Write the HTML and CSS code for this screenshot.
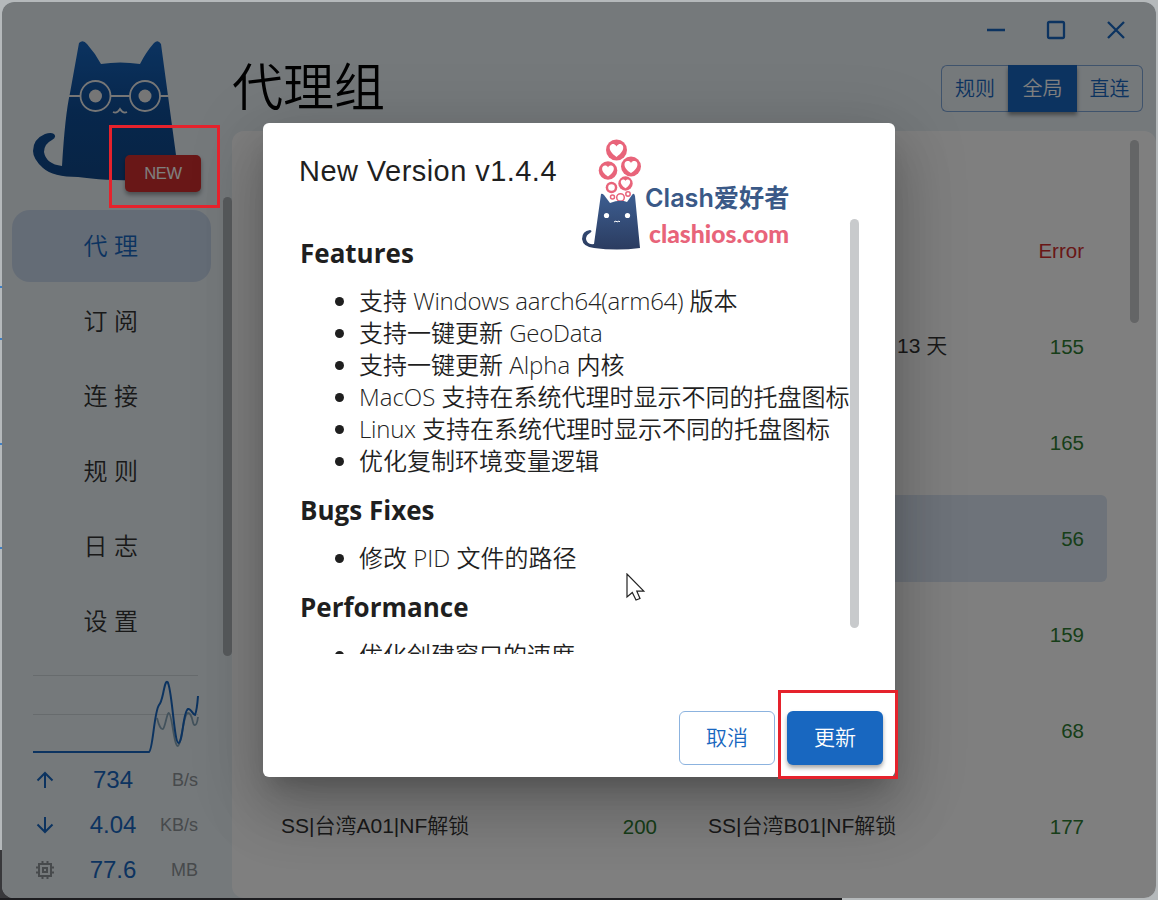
FILE: index.html
```html
<!DOCTYPE html>
<html lang="zh-CN">
<head>
  <meta charset="UTF-8" />
  <title>Clash Verge</title>
  <link rel="stylesheet" href="styles.css">
</head>
<body>

  <div class="window">

    <!-- SIDEBAR -->
    <aside class="sidebar">
      <div class="logo">
        <svg width="146" height="143" viewBox="0 0 146 143">
          <defs>
            <linearGradient id="catFill" x1="0" y1="0" x2="0" y2="1">
              <stop offset="0" stop-color="#1766c0" />
              <stop offset="0.5" stop-color="#0f4e98" />
              <stop offset="1" stop-color="#10488a" />
            </linearGradient>
          </defs>
          <path fill="url(#catFill)" d="M46 3Q50-1 54 4Q62 13 68 24Q87 21 107 24Q113 12 121 3Q125-1 128 4L143 115V140Q80 142 45 137Q20 137 10 128Q0 119 0 111Q0 99 12 94Q18 92 21 94Q24 97 19 100Q11 104 11 112Q13 124 29 126Q32 75 37 53Z" />
          <g fill="none" stroke="#ededed" stroke-width="1.8">
            <path d="M36 56H47M78 56H97M127 56H136" />
            <circle cx="62.500" cy="56" r="15" />
            <circle cx="112" cy="56" r="15" />
            <path d="M80 72Q84 74 87 69Q90 74 94 72" />
          </g>
          <circle cx="62.500" cy="56" r="6.500" fill="#ededed" />
          <circle cx="112" cy="56" r="6.500" fill="#ededed" />
        </svg>
        <button class="new-btn">NEW</button>
      </div>

      <ul class="menu">
        <li class="active">代理</li>
        <li>订阅</li>
        <li>连接</li>
        <li>规则</li>
        <li>日志</li>
        <li>设置</li>
      </ul>

      <div class="traffic">
        <svg class="graph" width="166" height="80" viewBox="0 0 166 80" fill="none">
          <path d="M0 1.500H165M0 40.500H165" stroke="#cfd6db" />
          <path d="M124 44Q127 56 130 55C132 54 134 38 136 39C139 40 141 73 145 72C149 70 150 40 155 39C160 39 159 52 162 51Q164 51 165 43" stroke="#86a5b8" stroke-width="1.800" />
          <path d="M0 78H116C120 76 121 38 126 31Q128 29 130 20C132 10 133 7 134.500 8C139 13 141 69 145.500 69C150 68 150 37 155 35C158 34 160 41 162 41Q164 36 165 22" stroke="#1867c0" stroke-width="2" />
        </svg>
        <div class="stat">
          <svg width="24" height="24" viewBox="0 0 24 24"><path d="M12 20V5M4.500 12.500L12 5L19.500 12.500" /></svg>
          <b>734</b><span>B/s</span>
        </div>
        <div class="stat">
          <svg width="24" height="24" viewBox="0 0 24 24"><path d="M12 4V19M4.500 11.500L12 19L19.500 11.500" /></svg>
          <b>4.04</b><span>KB/s</span>
        </div>
        <div class="stat">
          <svg class="chip" width="24" height="24" viewBox="0 0 24 24"><path d="M6 6H18V18H6ZM10 10H14V14H10ZM9.500 6V3M14.500 6V3M9.500 21V18M14.500 21V18M3 9.500H6M3 14.500H6M18 9.500H21M18 14.500H21" /></svg>
          <b>77.6</b><span>MB</span>
        </div>
      </div>
      <i class="scrollbar side-scroll"></i>
    </aside>

    <!-- PROXIES PAGE -->
    <main class="main">
      <div class="controls">
        <svg width="24" height="24" viewBox="0 0 24 24"><path d="M3 12H21" /></svg>
        <svg width="24" height="24" viewBox="0 0 24 24"><rect x="4" y="4" width="16" height="16" rx="1.500" /></svg>
        <svg width="24" height="24" viewBox="0 0 24 24"><path d="M4 4L20 20M20 4L4 20" /></svg>
      </div>
      <header class="header">
        <h1>代理组</h1>
        <div class="modes">
          <button>规则</button>
          <button class="active">全局</button>
          <button>直连</button>
        </div>
      </header>

      <section class="panel">
        <div class="proxies">
          <div class="proxy"></div>
          <div class="proxy"><em class="error">Error</em></div>
          <div class="proxy"></div>
          <div class="proxy"><span>距离下次重置剩余：13 天</span><em>155</em></div>
          <div class="proxy"></div>
          <div class="proxy"><em>165</em></div>
          <div class="proxy"></div>
          <div class="proxy selected"><em>56</em></div>
          <div class="proxy"></div>
          <div class="proxy"><em>159</em></div>
          <div class="proxy"></div>
          <div class="proxy"><em>68</em></div>
          <div class="proxy"><span>SS|台湾A01|NF解锁</span><em>200</em></div>
          <div class="proxy"><span>SS|台湾B01|NF解锁</span><em>177</em></div>
        </div>
        <i class="scrollbar panel-scroll"></i>
      </section>
    </main>
  </div>

  <!-- UPDATE DIALOG -->
  <div class="backdrop">
    <div class="dialog">
      <h2>New Version v1.4.4</h2>
      <div class="notes">
        <h3>Features</h3>
        <ul>
          <li>支持 <span class="narrow">Windows aarch64(arm64)</span> 版本</li>
          <li>支持一键更新 <span class="narrow">GeoData</span></li>
          <li>支持一键更新 Alpha 内核</li>
          <li>MacOS 支持在系统代理时显示不同的托盘图标</li>
          <li><span class="narrow">Linux</span> 支持在系统代理时显示不同的托盘图标</li>
          <li>优化复制环境变量逻辑</li>
        </ul>
        <h3>Bugs Fixes</h3>
        <ul>
          <li>修改 PID 文件的路径</li>
        </ul>
        <h3>Performance</h3>
        <ul>
          <li>优化创建窗口的速度</li>
        </ul>
        <i class="scrollbar notes-scroll"></i>
      </div>
      <div class="actions">
        <button>取消</button>
        <button class="primary">更新</button>
      </div>

      <div class="brand">
        <svg width="60" height="112" viewBox="0 0 60 112">
          <defs>
            <linearGradient id="brandFill" x1="0" y1="0" x2="0" y2="1">
              <stop offset="0" stop-color="#3d5e91" />
              <stop offset="1" stop-color="#2b3c60" />
            </linearGradient>
            <path id="heart" d="M0 6C-9 0-6-6-2-5Q0-4 0-3Q0-4 2-5C6-6 9 0 0 6Z" fill="#fff" />
          </defs>
          <g fill="#e8647a">
            <circle cx="34.500" cy="11" r="10.500" />
            <circle cx="26" cy="31.500" r="9.300" />
            <circle cx="49" cy="27.500" r="10" />
            <circle cx="43.500" cy="44.500" r="7.200" />
            <circle cx="29.500" cy="48.500" r="5.800" />
          </g>
          <use href="#heart" transform="translate(34.500 11) scale(1.150)" />
          <use href="#heart" transform="translate(26 31.500) scale(1)" />
          <use href="#heart" transform="translate(49 27.500) scale(1.100)" />
          <use href="#heart" transform="translate(43.500 44.500) scale(.8)" />
          <circle cx="29.500" cy="48.500" r="3.300" fill="#fff" />
          <g fill="#fff" stroke="#e8647a" stroke-width="1.500">
            <circle cx="38.500" cy="58.500" r="3.800" />
            <circle cx="30.500" cy="58" r="2" />
            <circle cx="46" cy="55" r="2.200" />
          </g>
          <path fill="url(#brandFill)" d="M19 55Q20 54 22 56L28 64Q38 60 45 63L50 56Q52 53 53 57L58 109Q35 112 12 109Q1 108 0 100Q0 92 8 91Q11 92 8 94Q4 96 4 100Q5 106 12 105Z" />
          <circle cx="24.500" cy="76.500" r="2.600" fill="#fff" />
          <circle cx="45.500" cy="76.500" r="2.600" fill="#fff" />
          <path d="M32 83L34 82L35 83L37 82L38 83" fill="none" stroke="#fff" />
        </svg>
        <div class="brand-text">
          <strong>Clash爱好者</strong>
          <span>clashios.com</span>
        </div>
      </div>
    </div>
  </div>

  <!-- HIGHLIGHTS -->
  <div class="mark mark-new"></div>
  <div class="mark mark-update"></div>
  <svg class="cursor" width="20" height="30" viewBox="0 0 20 30"><path d="M1 1V24L6.300 19.500L10 27L14 25.500L10.800 18.200H17.800Z" fill="#fff" stroke="#222" stroke-width="1.200" /></svg>

</body>
</html>
```
FILE: styles.css
```css
* {
  box-sizing: border-box;
}
body {
  margin: 0;
  width: 1158px;
  height: 900px;
  padding: 2px;
  overflow: hidden;
  position: relative;
  background:
    linear-gradient(#1d1d20, #1d1d20) 0 898px / 842px 2px no-repeat,
    linear-gradient(#38383b, #38383b) 0 850px / 14px 50px no-repeat,
    linear-gradient(#3f7fc4, #3f7fc4) 0 286px / 2px 2px no-repeat,
    linear-gradient(#3f7fc4, #3f7fc4) 0 338px / 2px 2px no-repeat,
    linear-gradient(#3f7fc4, #3f7fc4) 0 443px / 2px 2px no-repeat,
    linear-gradient(#3f7fc4, #3f7fc4) 0 547px / 2px 2px no-repeat,
    #b5b9bb;
  font-family: "Liberation Sans", "Noto Sans CJK SC", sans-serif;
  font-weight: 350;
  color: #333;
}
h1, h2, h3, ul {
  margin: 0;
  padding: 0;
  font-weight: 350;
}
button {
  font-family: inherit;
  font-weight: 350;
  padding: 0;
}
.window {
  display: flex;
  width: 1154px;
  height: 896px;
  border-radius: 12px;
  overflow: hidden;
  background: #eaf2f7;
}
.scrollbar {
  position: absolute;
  width: 9px;
  border-radius: 5px;
  background: #c8cacc;
}

/* sidebar */
.sidebar {
  position: relative;
  width: 230px;
  padding: 38px 0 0 10px;
}
.logo {
  position: relative;
  height: 170px;
  padding-left: 21px;
}
.new-btn {
  position: absolute;
  left: 113px;
  top: 115px;
  width: 76px;
  height: 37px;
  border: none;
  border-radius: 5px;
  background: #d32f2f;
  color: #fff;
  font-size: 16.5px;
  letter-spacing: -0.4px;
  box-shadow: 0 3px 4px rgba(0,0,0,0.35);
}
.menu {
  list-style: none;
  display: flex;
  flex-direction: column;
  gap: 3px;
}
.menu li {
  width: 199px;
  height: 72px;
  line-height: 73px;
  border-radius: 18px;
  text-align: center;
  font-size: 24px;
  letter-spacing: 6.5px;
  padding-left: 5px;
}
.menu li.active {
  background: #c9d8ec;
  color: #1867c0;
}
.side-scroll {
  right: 0;
  top: 195px;
  height: 459px;
  background: #b0b6ba;
}
.traffic {
  padding: 17px 0 0 21px;
  width: 188px;
}
.graph {
  display: block;
}
.stat {
  display: flex;
  align-items: center;
  height: 45px;
}
.graph + .stat {
  margin-top: 3px;
}
.stat svg, .controls svg {
  fill: none;
  stroke: #1867c0;
  stroke-width: 2;
}
.stat .chip {
  stroke: #8e9498;
}
.stat b {
  width: 112px;
  text-align: center;
  font-size: 24px;
  font-weight: 400;
  color: #1867c0;
}
.stat span {
  width: 56px;
  margin-left: -27px;
  padding-top: 1px;
  text-align: right;
  font-size: 18px;
  color: #8e9498;
}

/* main */
.main {
  width: 924px;
}
.controls {
  display: flex;
  justify-content: flex-end;
  gap: 36px;
  padding: 16px 28px 0 0;
  height: 56px;
}
.controls svg {
  stroke-width: 2.3;
}
.header {
  display: flex;
  justify-content: space-between;
  height: 73px;
  padding-right: 13px;
}
.header h1 {
  font-size: 51px;
  line-height: 62px;
  color: #000;
}
.modes {
  display: flex;
  height: 47px;
  margin-top: 7px;
}
.modes button {
  width: 67px;
  border: 1px solid #7fa6d8;
  border-radius: 6px 0 0 6px;
  border-right: none;
  background: none;
  padding-bottom: 2px;
  font-size: 20px;
  color: #1867c0;
}
.modes button.active {
  width: 69px;
  border: none;
  border-radius: 0;
  background: #1867c0;
  color: #fff;
  box-shadow: 0 3px 4px rgba(0,0,0,0.4);
}
.modes button:last-child {
  width: 66px;
  border-left: none;
  border-right: 1px solid #7fa6d8;
  border-radius: 0 6px 6px 0;
}
.panel {
  position: relative;
  height: 767px;
  border-radius: 12px;
  background: #fff;
  padding: 76px 0 0 25px;
}
.proxies {
  display: grid;
  grid-template-columns: 423px 423px;
  grid-auto-rows: 87px;
  gap: 9px 4px;
}
.proxy {
  display: flex;
  align-items: center;
  padding: 0 23px 0 24px;
  border-radius: 6px;
  font-size: 21px;
}
.proxy span {
  padding-bottom: 5px;
}
.proxy em {
  margin-left: auto;
  padding-top: 1px;
  font-style: normal;
  font-size: 20.5px;
  color: #2e7d32;
}
.proxy em.error {
  color: #d32f2f;
}
.proxy.selected {
  background: #dce7f4;
}
.panel-scroll {
  right: 17px;
  top: 9px;
  height: 183px;
}

/* dialog */
.backdrop {
  position: absolute;
  inset: 2px;
  border-radius: 12px;
  background: rgba(0,0,0,0.5);
  padding: 121px 0 0 261px;
}
.dialog {
  position: relative;
  width: 632px;
  height: 654px;
  border-radius: 6px;
  background: #fff;
  color: #1f1f1f;
  box-shadow: 0 16px 22px -10px rgba(0,0,0,0.2), 0 36px 57px 5px rgba(0,0,0,0.14), 0 14px 69px 12px rgba(0,0,0,0.12);
}
.dialog h2 {
  height: 96px;
  padding: 24px 0 0 36px;
  font-size: 29px;
  line-height: 48px;
  letter-spacing: 0.45px;
}
.notes {
  position: relative;
  width: 560px;
  height: 435px;
  margin-left: 36px;
  overflow: hidden;
  padding-top: 15px;
  font-family: "Open Sans", "Noto Sans CJK SC", sans-serif;
}
.notes h3 {
  padding-left: 1px;
  font-size: 26px;
  font-weight: 700;
  line-height: 38px;
}
.notes ul {
  padding-left: 60px;
  margin: 13px 0 14px;
}
.notes li {
  font-size: 24px;
  line-height: 32px;
  height: 32px;
  white-space: nowrap;
}
.notes .narrow {
  letter-spacing: -0.25px;
}
.notes-scroll {
  right: 0;
  top: 0;
  height: 409px;
}
.actions {
  display: flex;
  gap: 12px;
  justify-content: flex-end;
  padding: 57px 12px 0 0;
}
.actions button {
  width: 96px;
  height: 54px;
  border: 1px solid #8cb3df;
  border-radius: 6px;
  background: #fff;
  color: #1867c0;
  padding-bottom: 4px;
  font-size: 21px;
}
.actions .primary {
  border: none;
  background: #1867c0;
  color: #fff;
  box-shadow: 0 3px 4px rgba(0,0,0,0.35);
}
.brand {
  position: absolute;
  left: 319px;
  top: 16px;
  display: flex;
}
.brand-text {
  display: flex;
  flex-direction: column;
  padding: 42px 0 0 3px;
  white-space: nowrap;
}
.brand-text strong {
  font-family: Inter, "Noto Sans CJK SC", sans-serif;
  font-size: 25.2px;
  line-height: 35px;
  font-weight: 600;
  color: #3a5987;
}
.brand-text span {
  font-family: Lato, sans-serif;
  font-size: 24.7px;
  line-height: 35px;
  font-weight: 900;
  color: #e8647a;
  padding-left: 4px;
}

/* highlights */
.mark {
  position: absolute;
  border: 3px solid #e5222c;
}
.mark-new {
  left: 109px;
  top: 125px;
  width: 111px;
  height: 83px;
}
.mark-update {
  left: 778px;
  top: 690px;
  width: 120px;
  height: 89px;
}
.cursor {
  position: absolute;
  left: 626px;
  top: 573px;
}
```
